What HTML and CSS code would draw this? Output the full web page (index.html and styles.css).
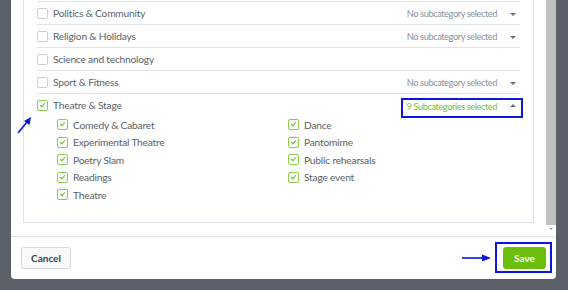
FILE: index.html
```html
<!DOCTYPE html>
<html lang="en">
<head>
    <meta charset="UTF-8">
    <title>Categories</title>
    <link rel="stylesheet" href="styles.css">
</head>
<body>

    <div class="modal">
        <div class="modal-body">
            <div class="content">
                <div class="panel">
                    <div class="row">
                        <span class="cb"></span>
                        <span class="label">Politics &amp; Community</span>
                        <span class="dropdown">No subcategory selected <i class="caret"></i></span>
                    </div>
                    <div class="row">
                        <span class="cb"></span>
                        <span class="label">Religion &amp; Holidays</span>
                        <span class="dropdown">No subcategory selected <i class="caret"></i></span>
                    </div>
                    <div class="row">
                        <span class="cb"></span>
                        <span class="label">Science and technology</span>
                    </div>
                    <div class="row">
                        <span class="cb"></span>
                        <span class="label">Sport &amp; Fitness</span>
                        <span class="dropdown">No subcategory selected <i class="caret"></i></span>
                    </div>
                    <div class="row open">
                        <span class="cb checked"></span>
                        <span class="label">Theatre &amp; Stage</span>
                        <span class="dropdown active">9 Subcategories selected <i class="caret up"></i></span>
                    </div>
                    <div class="subs">
                        <div class="sub"><span class="cb checked"></span>Comedy &amp; Cabaret</div>
                        <div class="sub"><span class="cb checked"></span>Dance</div>
                        <div class="sub"><span class="cb checked"></span>Experimental Theatre</div>
                        <div class="sub"><span class="cb checked"></span>Pantomime</div>
                        <div class="sub"><span class="cb checked"></span>Poetry Slam</div>
                        <div class="sub"><span class="cb checked"></span>Public rehearsals</div>
                        <div class="sub"><span class="cb checked"></span>Readings</div>
                        <div class="sub"><span class="cb checked"></span>Stage event</div>
                        <div class="sub"><span class="cb checked"></span>Theatre</div>
                    </div>
                </div>
            </div>
            <div class="scrollbar">
                <div class="thumb"></div>
                <i class="scroll-arrow"></i>
            </div>
        </div>
        <div class="modal-footer">
            <button class="btn">Cancel</button>
            <button class="btn btn-save">Save</button>
        </div>
    </div>

    <!-- annotations -->
    <div class="mark mark-dropdown"></div>
    <div class="mark mark-save"></div>
    <svg class="arrow arrow-check" width="20" height="22" viewBox="0 0 20 22">
        <line x1="2" y1="20" x2="11" y2="9" stroke="#0b16e0" stroke-width="1.6"/>
        <polygon points="15,4 13.5,12 8,8" fill="#0b16e0"/>
    </svg>
    <svg class="arrow arrow-save" width="32" height="10" viewBox="0 0 32 10">
        <line x1="1" y1="5" x2="22" y2="5" stroke="#0b16e0" stroke-width="1.6"/>
        <polygon points="30,5 21,1.5 21,8.5" fill="#0b16e0"/>
    </svg>

</body>
</html>
```

FILE: styles.css
```css
body {
    margin: 0;
    height: 290px;
    overflow: hidden;
    background-color: #5b6068;
    font-family: Lato, "Open Sans", sans-serif;
    font-size: 10.2px;
    letter-spacing: -0.2px;
    color: #5a5f66;
}

.modal {
    margin-left: 11px;
    width: 545px;
    background-color: #fff;
    border-radius: 0 0 4px 4px;
}

.modal-body {
    display: flex;
    height: 236px;
}

.content {
    flex: 1;
    padding: 0 12px 12px 12px;
}

.panel {
    height: 223px;
    box-sizing: border-box;
    border: 1px solid #dde3ea;
    border-top: none;
    padding: 1px 13px 0 13px;
}

.row {
    display: flex;
    align-items: center;
    height: 22px;
    border-top: 1px solid #dde3ea;
}

.label {
    flex: 1;
    margin-left: 5px;
}

.dropdown {
    display: flex;
    align-items: center;
    font-size: 9.3px;
    letter-spacing: -0.45px;
    color: #8a939d;
    padding-right: 4px;
}

.dropdown.active {
    color: #79c132;
    margin-top: 3px;
}

.caret {
    margin-left: 13px;
    width: 0;
    height: 0;
    border-left: 3px solid transparent;
    border-right: 3px solid transparent;
    border-top: 3px solid #68727d;
    margin-top: 3px;
}

.caret.up {
    border-top: none;
    border-bottom: 3px solid #68727d;
    margin-top: -2px;
}

.cb {
    position: relative;
    display: inline-block;
    width: 9px;
    height: 9px;
    border: 1px solid #c9cfd6;
    border-radius: 2px;
    background-color: #fff;
    flex-shrink: 0;
}

.cb.checked {
    border-color: #8fcb4f;
}

.cb.checked::after {
    content: '';
    position: absolute;
    left: 3px;
    top: 1px;
    width: 2px;
    height: 4px;
    border-right: 1.2px solid #6fb92a;
    border-bottom: 1.2px solid #6fb92a;
    transform: rotate(40deg);
}

.subs {
    display: grid;
    grid-template-columns: 231px 231px;
    padding-left: 20px;
}

.sub {
    display: flex;
    align-items: center;
    gap: 5px;
    height: 17.5px;
}

.scrollbar {
    width: 10px;
    display: flex;
    flex-direction: column;
    align-items: center;
    height: 233px;
}

.thumb {
    width: 10px;
    height: 225px;
    background-color: #c1c1c1;
}

.scroll-arrow {
    margin-top: 3px;
    width: 0;
    height: 0;
    border-left: 2px solid transparent;
    border-right: 2px solid transparent;
    border-top: 2px solid #a3a3a3;
}

.modal-footer {
    display: flex;
    justify-content: space-between;
    align-items: center;
    height: 42px;
    border-top: 1px solid #dde3ea;
    padding: 0 10px;
}

.btn {
    height: 22px;
    width: 50px;
    padding: 0;
    font-family: Lato, "Open Sans", sans-serif;
    font-size: 10px;
    font-weight: bold;
    color: #3a3f45;
    background-color: #f8f9fa;
    border: 1px solid #d5dae0;
    border-radius: 3px;
}

.btn-save {
    width: 43px;
    color: #fff;
    background-color: #6bbf0c;
    border-color: #6bbf0c;
}

.mark {
    position: absolute;
    border: 2px solid #0b16e0;
}

.mark-dropdown {
    left: 401px;
    top: 98px;
    width: 118px;
    height: 16px;
}

.mark-save {
    left: 495px;
    top: 242px;
    width: 53px;
    height: 27px;
}

.arrow {
    position: absolute;
}

.arrow-check {
    left: 16px;
    top: 113px;
}

.arrow-save {
    left: 461px;
    top: 253px;
}
```
